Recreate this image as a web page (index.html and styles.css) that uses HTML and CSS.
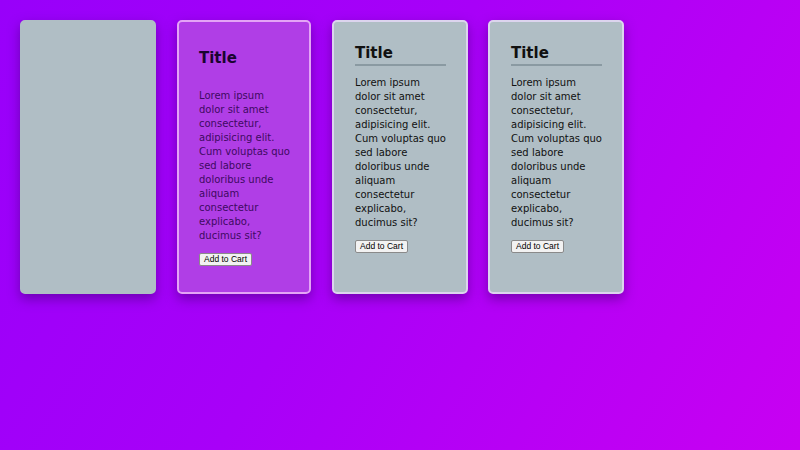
FILE: index.html
```html
<!DOCTYPE html>
<html>
<head>
<meta charset="utf-8">
<link rel="stylesheet" href="styles.css">
</head>
<body>
<div class="row">
  <div class="card card-empty"></div>
  <div class="card card-hover">
    <h2 class="title">Title</h2>
    <p class="text">Lorem ipsum dolor sit amet consectetur, adipisicing elit. Cum voluptas quo sed labore doloribus unde aliquam consectetur explicabo, ducimus sit?</p>
    <button class="btn">Add to Cart</button>
  </div>
  <div class="card">
    <h2 class="title lined">Title</h2>
    <p class="text">Lorem ipsum dolor sit amet consectetur, adipisicing elit. Cum voluptas quo sed labore doloribus unde aliquam consectetur explicabo, ducimus sit?</p>
    <button class="btn">Add to Cart</button>
  </div>
  <div class="card">
    <h2 class="title lined">Title</h2>
    <p class="text">Lorem ipsum dolor sit amet consectetur, adipisicing elit. Cum voluptas quo sed labore doloribus unde aliquam consectetur explicabo, ducimus sit?</p>
    <button class="btn">Add to Cart</button>
  </div>
</div>
</body>
</html>
```
FILE: styles.css
```css
html, body {
  margin: 0;
  height: 100%;
}
body {
  background: linear-gradient(120deg, #9800fa 0%, #a800f8 45%, #c800f2 100%);
  font-family: "DejaVu Sans", sans-serif;
  overflow: hidden;
}
.row {
  display: flex;
  gap: 20px;
  padding: 20px 0 0 20px;
  align-items: flex-start;
}
.card {
  box-sizing: border-box;
  flex: none;
  width: 136px;
  height: 274px;
  background: #b0bec5;
  border: 2px solid #dcd4ee;
  border-radius: 5px;
  padding: 22px 18px 0 21px;
  box-shadow: 0 5px 12px rgba(60, 0, 110, 0.5);
  color: #111;
}
.card-empty {
  border-color: #b0bec5;
}
.card-hover {
  width: 134px;
  margin: 0 1px;
  padding-left: 20px;
  padding-right: 18px;
  background: #b03ee6;
  border-color: #e4a4f6;
  padding-top: 27px;
  color: #3e0a62;
}
.card-hover .title {
  color: #1a0430;
  margin-bottom: 22px;
}
.title {
  margin: 0;
  font-size: 15px;
  font-weight: bold;
  line-height: 18px;
}
.lined {
  border-bottom: 2px solid #8a9aa2;
  padding-bottom: 2px;
  margin-bottom: 10px;
  margin-right: 2px;
}
.text {
  margin: 0 0 10px 0;
  font-size: 10px;
  line-height: 14px;
}
.btn {
  display: block;
  font-family: "Liberation Sans", Arial, sans-serif;
  font-size: 8.5px;
  padding: 0 4px;
  height: 13px;
  background: #f2f2f2;
  border: 1px solid #8a8a8a;
  border-radius: 2px;
  color: #000;
  line-height: 11px;
}
```
